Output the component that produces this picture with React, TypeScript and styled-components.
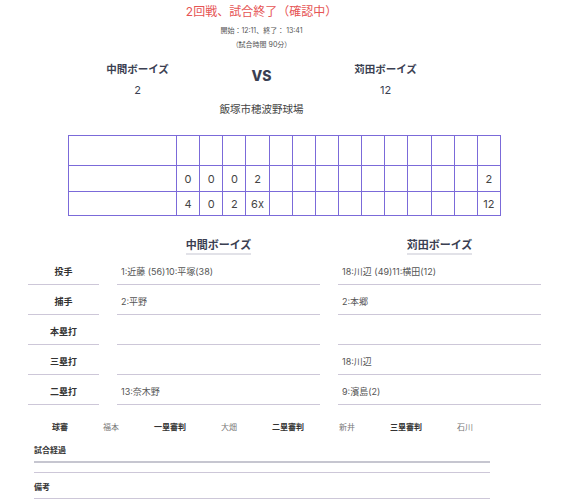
import React from "react";
import styled, { createGlobalStyle } from "styled-components";

const Global = createGlobalStyle`
  html, body { margin: 0; padding: 0; background: #fff; }
  body { font-family: "Inter", "Noto Sans CJK JP", sans-serif; color: #333; }
`;

const Page = styled.div`
  width: 568px;
  display: flex;
  flex-direction: column;
`;

const Header = styled.header`
  width: 523px;
  display: flex;
  flex-direction: column;
  align-items: center;
  padding-top: 4px;
`;

const Title = styled.h1`
  margin: 0;
  font-size: 12px;
  line-height: 16px;
  font-weight: 400;
  color: #e65454;
`;

const SmallInfo = styled.div<{ $top: number }>`
  margin-top: ${(p) => p.$top}px;
  font-size: 7px;
  line-height: 10px;
  color: #555;
`;

const Matchup = styled.div`
  margin-top: 13px;
  display: grid;
  grid-template-columns: 124px 124px 124px;
  align-items: start;
`;

const TeamBlock = styled.div`
  display: flex;
  flex-direction: column;
  align-items: center;
  gap: 6px;
`;

const TeamName = styled.div`
  font-size: 10.5px;
  line-height: 14px;
  font-weight: 700;
  color: #3b3f52;
`;

const TeamScore = styled.div`
  font-size: 11px;
  line-height: 14px;
  color: #3b3f52;
`;

const Vs = styled.div`
  text-align: center;
  font-size: 14px;
  line-height: 14px;
  font-weight: 800;
  color: #3b3f52;
  padding-top: 6px;
`;

const Venue = styled.div`
  margin-top: 6px;
  font-size: 10.5px;
  line-height: 14px;
  color: #444;
`;

const ScoreTable = styled.table`
  margin: 18px 0 0 68px;
  width: 433px;
  border-collapse: collapse;
  table-layout: fixed;
  font-size: 11px;
  color: #444;
`;

const Cell = styled.td`
  border: 1px solid #7b6ad9;
  padding: 0;
  text-align: center;
`;

const Row = styled.tr<{ $h: number }>`
  height: ${(p) => p.$h}px;
`;

const Stats = styled.div`
  margin: 22px 0 0 28px;
  display: grid;
  grid-template-columns: 71px 203px 203px;
  column-gap: 18px;
`;

const TeamHead = styled.div`
  display: flex;
  justify-content: center;
  align-items: flex-start;
  height: 17px;
`;

const TeamHeadName = styled.span`
  font-size: 11px;
  line-height: 14px;
  font-weight: 700;
  color: #3b3f52;
  padding-bottom: 1px;
  border-bottom: 2px solid #e2e2e8;
`;

const LabelCell = styled.div`
  height: 30px;
  box-sizing: border-box;
  border-bottom: 1px solid #cdc7d8;
  display: flex;
  align-items: center;
  justify-content: center;
  padding-top: 4px;
  font-size: 9px;
  font-weight: 700;
  color: #333;
`;

const ValueCell = styled.div`
  height: 30px;
  box-sizing: border-box;
  border-bottom: 1px solid #cdc7d8;
  display: flex;
  align-items: center;
  padding: 4px 0 0 4px;
  font-size: 9px;
  color: #555;
`;

const Umpires = styled.div`
  margin: 16px 0 0 52px;
  display: flex;
  gap: 35px;
  font-size: 8px;
  line-height: 12px;
`;

const UmpItem = styled.div<{ $label?: boolean }>`
  font-weight: ${(p) => (p.$label ? 700 : 400)};
  color: ${(p) => (p.$label ? "#333" : "#777")};
`;

const Notes = styled.div`
  margin: 11px 0 0 34px;
  width: 456px;
  display: flex;
  flex-direction: column;
`;

const NoteLabel = styled.div`
  font-size: 8px;
  line-height: 12px;
  font-weight: 700;
  color: #333;
`;

const NoteBox = styled.div`
  margin-top: 5px;
  height: 9px;
  border-top: 2px solid #c6c6d0;
  border-bottom: 1px solid #cdc7d8;
  margin-bottom: 8px;
`;

const NoteLine = styled.div`
  margin-top: 5px;
  border-bottom: 1px solid #cdc7d8;
`;

const innings = 13;
const rows = [
  { team: "", runs: ["0", "0", "0", "2"], total: "2" },
  { team: "", runs: ["4", "0", "2", "6x"], total: "12" },
];

const statRows = [
  { label: "投手", a: "1:近藤 (56)10:平塚(38)", b: "18:川辺 (49)11:横田(12)" },
  { label: "捕手", a: "2:平野", b: "2:本郷" },
  { label: "本塁打", a: "", b: "" },
  { label: "三塁打", a: "", b: "18:川辺" },
  { label: "二塁打", a: "13:奈木野", b: "9:濱島(2)" },
];

const umpires = [
  ["球審", "福本"],
  ["一塁審判", "大畑"],
  ["二塁審判", "新井"],
  ["三塁審判", "石川"],
];

export default function App() {
  return (
    <Page>
      <Global />
      <Header>
        <Title>2回戦、試合終了（確認中）</Title>
        <SmallInfo $top={6}>開始：12:11、終了： 13:41</SmallInfo>
        <SmallInfo $top={4}>（試合時間 90分）</SmallInfo>
        <Matchup>
          <TeamBlock>
            <TeamName>中間ボーイズ</TeamName>
            <TeamScore>2</TeamScore>
          </TeamBlock>
          <Vs>VS</Vs>
          <TeamBlock>
            <TeamName>苅田ボーイズ</TeamName>
            <TeamScore>12</TeamScore>
          </TeamBlock>
        </Matchup>
        <Venue>飯塚市穂波野球場</Venue>
      </Header>

      <ScoreTable>
        <colgroup>
          <col style={{ width: 108 }} />
          {Array.from({ length: innings + 1 }).map((_, i) => (
            <col key={i} />
          ))}
        </colgroup>
        <tbody>
          <Row $h={30}>
            <Cell />
            {Array.from({ length: innings + 1 }).map((_, i) => (
              <Cell key={i} />
            ))}
          </Row>
          {rows.map((r, ri) => (
            <Row key={ri} $h={ri === 0 ? 26 : 24}>
              <Cell>{r.team}</Cell>
              {Array.from({ length: innings }).map((_, i) => (
                <Cell key={i}>{r.runs[i] ?? ""}</Cell>
              ))}
              <Cell>{r.total}</Cell>
            </Row>
          ))}
        </tbody>
      </ScoreTable>

      <Stats>
        <div />
        <TeamHead>
          <TeamHeadName>中間ボーイズ</TeamHeadName>
        </TeamHead>
        <TeamHead>
          <TeamHeadName>苅田ボーイズ</TeamHeadName>
        </TeamHead>
        {statRows.map((s) => (
          <React.Fragment key={s.label}>
            <LabelCell>{s.label}</LabelCell>
            <ValueCell>{s.a}</ValueCell>
            <ValueCell>{s.b}</ValueCell>
          </React.Fragment>
        ))}
      </Stats>

      <Umpires>
        {umpires.map(([l, n]) => (
          <React.Fragment key={l}>
            <UmpItem $label>{l}</UmpItem>
            <UmpItem>{n}</UmpItem>
          </React.Fragment>
        ))}
      </Umpires>

      <Notes>
        <NoteLabel>試合経過</NoteLabel>
        <NoteBox />
        <NoteLabel>備考</NoteLabel>
        <NoteLine />
      </Notes>
    </Page>
  );
}
